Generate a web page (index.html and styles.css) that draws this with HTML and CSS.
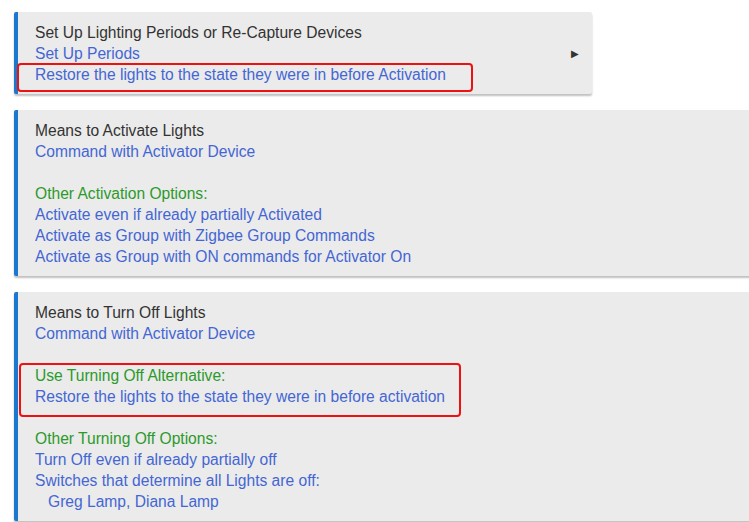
FILE: index.html
```html
<!DOCTYPE html>
<html lang="en">
<head>
    <meta charset="UTF-8">
    <title>Lighting Settings</title>
    <link rel="stylesheet" href="styles.css">
</head>
<body>
    <div class="page">
        <div class="card card-short">
            <div class="card-body">
                <div class="title">Set Up Lighting Periods or Re-Capture Devices</div>
                <div class="link">Set Up Periods</div>
                <div class="mark mark-one"><span class="link">Restore the lights to the state they were in before Activation</span></div>
            </div>
            <div class="arrow">&#9654;</div>
        </div>

        <div class="card">
            <div class="card-body">
                <div class="title">Means to Activate Lights</div>
                <div class="link">Command with Activator Device</div>
                <div class="gap"></div>
                <div class="label">Other Activation Options:</div>
                <div class="link">Activate even if already partially Activated</div>
                <div class="link">Activate as Group with Zigbee Group Commands</div>
                <div class="link">Activate as Group with ON commands for Activator On</div>
            </div>
        </div>

        <div class="card">
            <div class="card-body">
                <div class="title">Means to Turn Off Lights</div>
                <div class="link">Command with Activator Device</div>
                <div class="gap"></div>
                <div class="mark mark-two">
                    <div class="label">Use Turning Off Alternative:</div>
                    <div class="link">Restore the lights to the state they were in before activation</div>
                </div>
                <div class="gap"></div>
                <div class="label">Other Turning Off Options:</div>
                <div class="link">Turn Off even if already partially off</div>
                <div class="link">Switches that determine all Lights are off:</div>
                <div class="link indent">Greg Lamp, Diana Lamp</div>
            </div>
        </div>
    </div>
</body>
</html>
```

FILE: styles.css
```css
body {
    margin: 0;
    background-color: #ffffff;
    font-family: "Liberation Sans", Arial, sans-serif;
    font-size: 15.6px;
    overflow: hidden;
}

.page {
    padding: 12px 0 0 14px;
}

.card {
    display: flex;
    width: 760px;
    background-color: #ebebeb;
    border-left: 4px solid #1a78cf;
    border-radius: 2px;
    box-shadow: 0px 2px 2px rgba(0, 0, 0, 0.25);
    margin-bottom: 16px;
}

.card-short {
    width: 574px;
}

.card-body {
    flex: 1;
    padding: 10px 17px 9px;
    line-height: 21px;
}

.title {
    color: #333;
}

.link {
    color: #4466d4;
}

.label {
    color: #2b9a2b;
}

.gap {
    height: 21px;
}

.indent {
    padding-left: 13px;
}

.arrow {
    align-self: center;
    font-size: 10px;
    color: #333;
    padding-right: 13px;
}

.mark {
    position: relative;
}

.mark::after {
    content: "";
    position: absolute;
    border: 2px solid #ee1111;
    border-radius: 4px;
}

.mark-one::after {
    top: -1px;
    bottom: -7px;
    left: -18px;
    width: 452px;
}

.mark-two::after {
    top: -2px;
    bottom: -10px;
    left: -16px;
    width: 438px;
}
```
